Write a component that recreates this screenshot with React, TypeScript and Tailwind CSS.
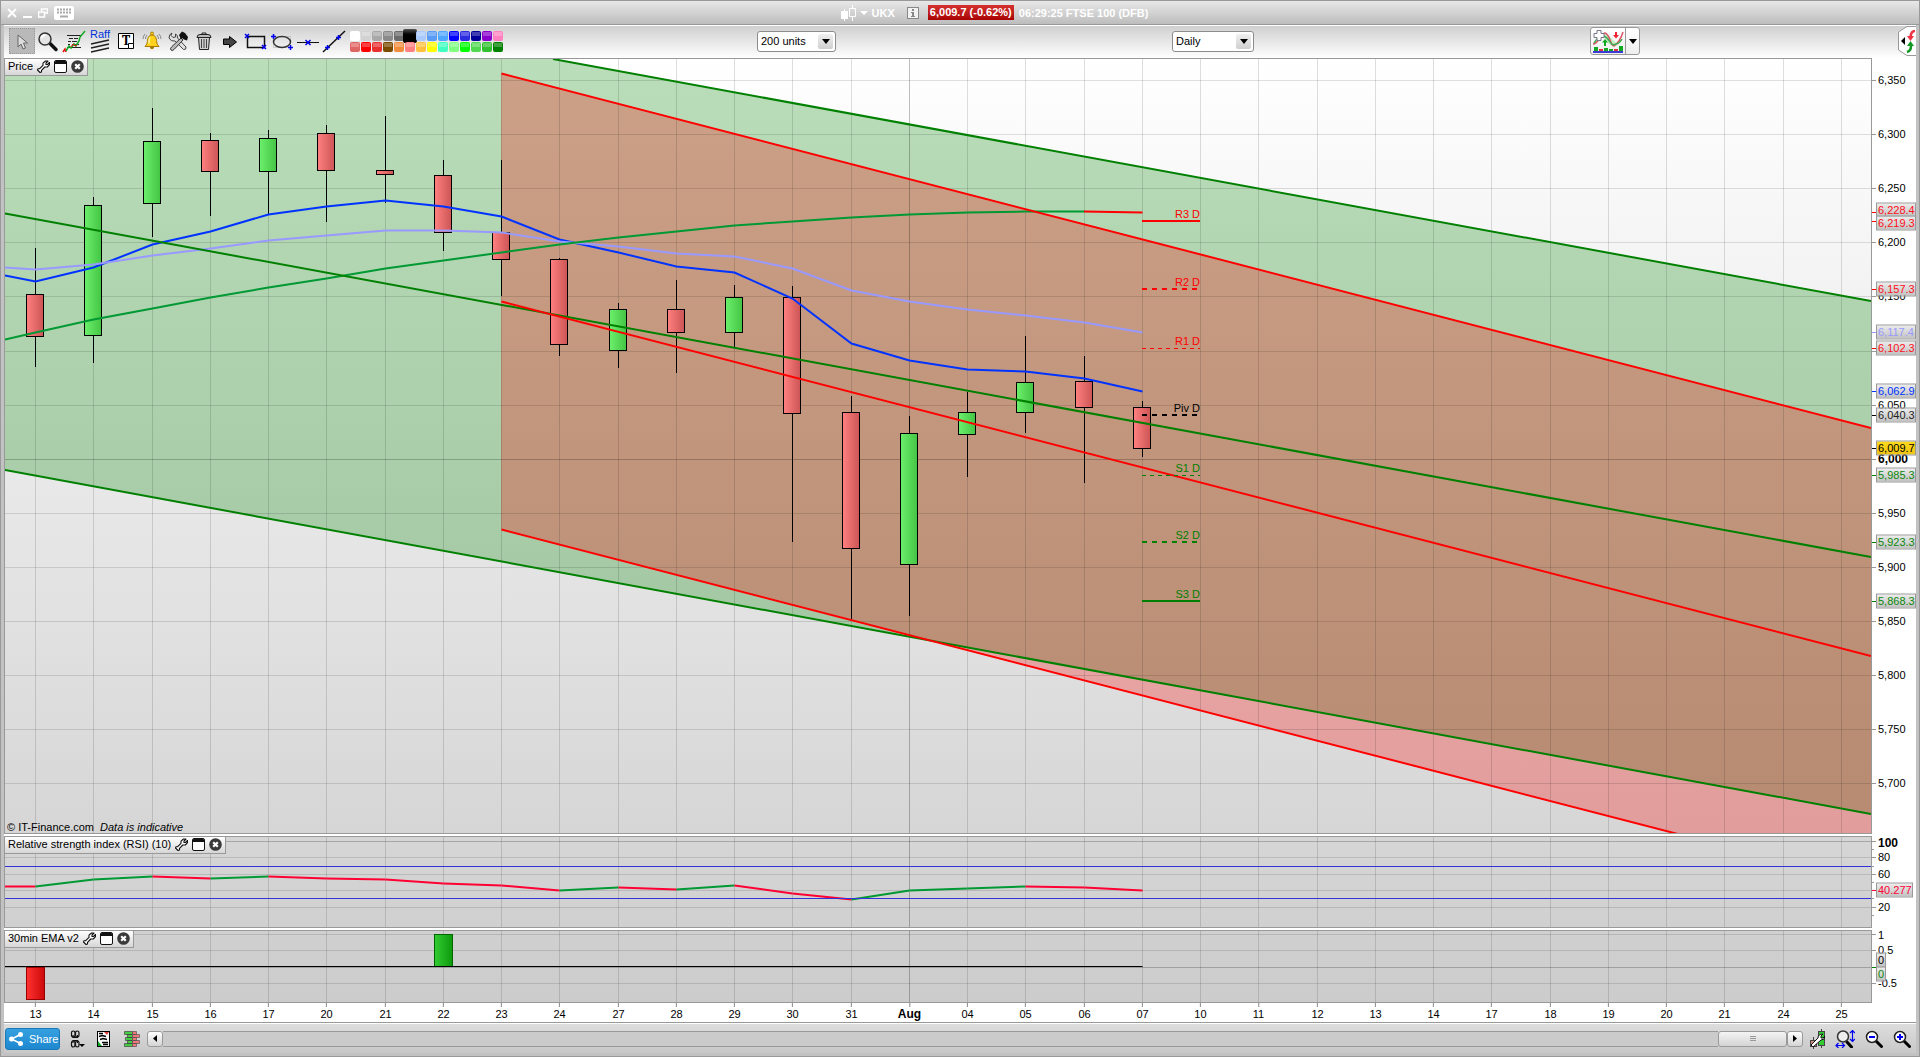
import React from "react";

type Candle = { high: number; top: number; bottom: number; low: number; up: boolean };
type Tag = { y: number; center: number; text: string; tone: string; tick: string; wide?: string };
type Mark = { y: number; text: string; bold?: boolean; shift?: number };

const LEFT = 5;
const WIDTH = 1866;

const dates = [
  "13", "14", "15", "16", "17", "20", "21", "22", "23", "24", "27", "28", "29", "30", "31", "Aug",
  "04", "05", "06", "07", "10", "11", "12", "13", "14", "17", "18", "19", "20", "21", "24", "25",
];
const dayX = (i: number) => Math.round(35 + 58.25 * i);
const priceY = (p: number) => Math.round(80 + (6350 - p) * 1.082);

const prices = [6350, 6300, 6250, 6200, 6150, 6100, 6050, 6000, 5950, 5900, 5850, 5800, 5750, 5700];

const c = (high: number, top: number, bottom: number, low: number, up: boolean): Candle => ({ high, top, bottom, low, up });
const candles: Candle[] = [
  c(248, 294, 337, 367, false),
  c(197, 205, 336, 363, true),
  c(108, 141, 204, 237, true),
  c(133, 140, 172, 216, false),
  c(130, 138, 172, 214, true),
  c(125, 133, 171, 222, false),
  c(116, 170, 175, 203, false),
  c(160, 175, 233, 251, false),
  c(160, 232, 260, 296, false),
  c(258, 259, 345, 356, false),
  c(303, 309, 351, 368, true),
  c(280, 309, 333, 373, false),
  c(285, 297, 333, 347, true),
  c(286, 297, 414, 542, false),
  c(396, 412, 549, 619, false),
  c(416, 433, 565, 616, true),
  c(392, 412, 435, 477, true),
  c(336, 382, 413, 433, true),
  c(356, 381, 408, 483, false),
  c(401, 407, 449, 457, false),
];

// Each series starts at the left edge and then has one value per day.
const fastMa = [275, 281, 267, 244, 231, 214, 206, 200, 206, 216, 239, 252, 266, 272, 298, 343, 360, 369, 371, 378, 391];
const slowMa = [267, 269, 264, 255, 248, 240, 235, 230, 230, 232, 241, 246, 253, 256, 268, 290, 301, 309, 315, 322, 332];
const longMa = [339, 332, 319, 308, 297, 287, 278, 268, 260, 252, 244, 237, 231, 225, 221, 217, 214, 212, 211, 211];
const rsi = [886, 886, 879, 876, 878, 876, 878, 879, 883, 885, 890, 887, 889, 885, 893, 899, 890, 888, 886, 887, 890];

const seriesX = (i: number) => (i === 0 ? LEFT : dayX(i - 1) + 0.5);
const points = (ys: number[]) => ys.map((y, i) => `${seriesX(i)},${y + 0.5}`).join(" ");

const pivots = [
  { text: "R3 D", y: 221, label: 214, color: "#ff0000", tone: "text-[#ff0000]", w: 2, dash: "" },
  { text: "R2 D", y: 289, label: 282, color: "#ff0000", tone: "text-[#ff0000]", w: 2, dash: "5 5" },
  { text: "R1 D", y: 348.5, label: 341, color: "#ff0000", tone: "text-[#ff0000]", w: 1, dash: "4 4" },
  { text: "Piv D", y: 415, label: 408, color: "#000000", tone: "text-black", w: 2, dash: "5 5" },
  { text: "S1 D", y: 475.5, label: 468, color: "#008000", tone: "text-[#008000]", w: 1, dash: "4 4" },
  { text: "S2 D", y: 542, label: 535, color: "#008000", tone: "text-[#008000]", w: 2, dash: "5 5" },
  { text: "S3 D", y: 601, label: 594, color: "#008000", tone: "text-[#008000]", w: 2, dash: "" },
];

const grey = "from-[#ececec] to-[#c2c2c2]";
const red = `text-[#ff0d1a] ${grey}`;
const green = `text-[#0c870c] ${grey}`;
const priceTags: Tag[] = [
  { y: 212, center: 210, text: "6,228.4", tone: red, tick: "bg-[#ff0000]" },
  { y: 221, center: 223, text: "6,219.3", tone: red, tick: "bg-[#ff0000]" },
  { y: 289, center: 289, text: "6,157.3", tone: red, tick: "bg-[#ff0000]" },
  { y: 332, center: 332, text: "6,117.4", tone: `text-[#9999ff] ${grey}`, tick: "bg-[#9999ff]" },
  { y: 348, center: 348, text: "6,102.3", tone: red, tick: "bg-[#ff0000]" },
  { y: 391, center: 391, text: "6,062.9", tone: `text-[#0033ff] ${grey}`, tick: "bg-[#0033ff]" },
  { y: 415, center: 415, text: "6,040.3", tone: `text-[#222222] ${grey}`, tick: "bg-black" },
  { y: 448, center: 448, text: "6,009.7", tone: "text-black from-[#ffd91a] to-[#efc414]", tick: "bg-black" },
  { y: 475, center: 475, text: "5,985.3", tone: green, tick: "bg-[#008000]" },
  { y: 542, center: 542, text: "5,923.3", tone: green, tick: "bg-[#008000]" },
  { y: 601, center: 601, text: "5,868.3", tone: green, tick: "bg-[#008000]" },
];

function Grid({ rows, top, height, major }: { rows: number[]; top: number; height: number; major: number[] }) {
  return (
    <g stroke="#000000" strokeWidth="1">
      {dates.map((d, i) => (
        <path key={i} d={`M${dayX(i) + 0.5} ${top}v${height}`} strokeOpacity={d === "Aug" ? 0.25 : 0.13} />
      ))}
      {rows.map((y) => (
        <path key={y} d={`M${LEFT} ${y + 0.5}h${WIDTH}`} strokeOpacity={major.includes(y) ? 0.22 : 0.12} />
      ))}
    </g>
  );
}

function Wrench() {
  return (
    <svg viewBox="0 0 13 13" className="size-[13px]">
      <path
        d="M8.500 1H11L9 3v1.500h1.500l2-2v2.200L10.300 7H7.800L4.500 10.300V12L3 12.500.5 10 1 8.700h1.700L6 5.300V3.200z"
        fill="#fff" stroke="#111" strokeWidth="1.100" strokeLinejoin="round"
      />
    </svg>
  );
}

function PaneHeader({ title }: { title: string }) {
  return (
    <div className="absolute left-0 top-0 flex h-[17px] items-center gap-1 border-b border-r border-[#999] bg-gradient-to-b from-white to-[#d6d6d6] pb-0.5 pl-[3px] pr-[3px]">
      <span className="whitespace-nowrap leading-[14px]">{title}</span>
      <button aria-label={`${title} settings`}><Wrench /></button>
      <button aria-label={`${title} window`}>
        <svg viewBox="0 0 13 13" className="size-[13px]">
          <rect x=".5" y=".5" width="12" height="12" rx="1.500" fill="#fff" stroke="#111" />
          <path d="M1 4V2q0-1 1-1h9q1 0 1 1v2z" fill="#111" />
        </svg>
      </button>
      <button aria-label={`${title} close`}>
        <svg viewBox="0 0 13 13" className="size-[13px]">
          <circle cx="6.500" cy="6.500" r="6.300" fill="#3a3a3a" />
          <path d="m4.200 4.200 4.600 4.600m0-4.600-4.600 4.600" stroke="#fff" strokeWidth="2.200" />
        </svg>
      </button>
    </div>
  );
}

function Axis({ top, height, marks, minor = [], tags }: { top: number; height: number; marks: Mark[]; minor?: number[]; tags: Tag[] }) {
  const at = (y: number) => ({ top: `${((y - top) / height) * 100}%` });
  return (
    <div className="relative w-11 shrink-0 bg-white">
      {marks.map((m) => (
        <React.Fragment key={m.y}>
          <span className="absolute left-0 h-px w-1 bg-[#999]" style={at(m.y)} />
          {m.text && (
            <span
              className={m.bold ? "absolute left-1.5 -translate-y-1/2 text-xs font-bold leading-[14px]" : "absolute left-1.5 -translate-y-1/2 leading-[14px]"}
              style={at(m.y + (m.shift ?? 0))}
            >
              {m.text}
            </span>
          )}
        </React.Fragment>
      ))}
      {minor.map((y) => (
        <span key={y} className="absolute left-0 h-px w-0.5 bg-[#999]" style={at(y)} />
      ))}
      {tags.map((t, i) => (
        <React.Fragment key={i}>
          <span className={`absolute left-0 h-px w-1 ${t.tick}`} style={at(t.y)} />
          <span
            className={`absolute left-1 flex h-[15px] -translate-y-1/2 items-center border border-[#999] bg-gradient-to-b pl-px leading-[13px] ${t.wide ?? "w-10"} ${t.tone}`}
            style={at(t.center)}
          >
            {t.text}
          </span>
        </React.Fragment>
      ))}
    </div>
  );
}

function PricePane() {
  const top = 59;
  const height = 774;
  return (
    <div className="flex min-h-[320px] flex-1">
      <div className="relative flex-1 overflow-hidden border border-[#999] bg-gradient-to-b from-white to-[#d6d6d6]">
        <svg viewBox={`${LEFT} ${top} ${WIDTH} ${height}`} preserveAspectRatio="none" className="absolute inset-0 h-full w-full">
          <defs>
            <linearGradient id="up"><stop offset="0" stopColor="#6cf06c" /><stop offset="1" stopColor="#44c444" /></linearGradient>
            <linearGradient id="down"><stop offset="0" stopColor="#ff8080" /><stop offset="1" stopColor="#cc5555" /></linearGradient>
          </defs>
          <path d="M5 59H553L1871 301V814L5 470z" fill="#008000" fillOpacity=".27" />
          <path d="M501 73.500 1871 428V884L501 529.500z" fill="#ff0000" fillOpacity=".27" />
          <Grid rows={prices.map(priceY)} top={top} height={height} major={[priceY(6000)]} />
          {candles.map((k, i) => (
            <g key={i} stroke="#000" strokeWidth="1">
              <path d={`M${dayX(i) + 0.5} ${k.high}V${k.low}`} />
              <rect x={dayX(i) - 8.5} y={k.top + 0.5} width="17" height={k.bottom - k.top - 1} fill={k.up ? "url(#up)" : "url(#down)"} />
            </g>
          ))}
          <g fill="none" strokeWidth="2">
            <polyline points={points(fastMa)} stroke="#0033ff" />
            <polyline points={points(slowMa)} stroke="#9999ff" />
            <polyline points={points(longMa)} stroke="#009933" />
            <path d="M1084 211.500 1142.500 212.500" stroke="#ff0000" />
            <path d="M553 59 1871 301M5 213.500 1871 557M5 470 1871 814" stroke="#008000" />
            <path d="M501.500 73.500 1871 428M501.500 301.500 1871 656M501.500 529.500 1871 884" stroke="#ff0000" />
          </g>
          {pivots.map((p) => (
            <path key={p.text} d={`M1142 ${p.y}h58`} stroke={p.color} strokeWidth={p.w} strokeDasharray={p.dash || undefined} />
          ))}
        </svg>
        {pivots.map((p) => (
          <span
            key={p.text}
            className={`absolute -translate-y-1/2 leading-[14px] ${p.tone}`}
            style={{ right: `${((1871 - 1200) / WIDTH) * 100}%`, top: `${((p.label - top) / height) * 100}%` }}
          >
            {p.text}
          </span>
        ))}
        <PaneHeader title="Price" />
        <p className="absolute bottom-0 left-0.5 leading-3">
          © IT-Finance.com <em className="ml-[3px]">Data is indicative</em>
        </p>
      </div>
      <Axis
        top={58}
        height={776}
        marks={prices.map((p) => ({ y: priceY(p), text: p === 6100 ? "" : p.toLocaleString("en-US"), bold: p === 6000 }))}
        tags={priceTags}
      />
    </div>
  );
}

function RsiPane() {
  return (
    <div className="flex h-[92px] shrink-0">
      <div className="relative flex-1 overflow-hidden border border-[#999] bg-gradient-to-b from-[#d6d6d6] to-[#d0d0d0]">
        <svg viewBox={`${LEFT} 837 ${WIDTH} 90`} preserveAspectRatio="none" className="absolute inset-0 h-full w-full">
          <Grid rows={[841, 857, 874, 890, 907]} top={837} height={90} major={[841]} />
          {rsi.slice(1).map((y, i) => (
            <path key={i} d={`M${seriesX(i)} ${rsi[i] + 0.5}L${seriesX(i + 1)} ${y + 0.5}`} stroke={y < rsi[i] ? "#009933" : "#ff0033"} strokeWidth="2" />
          ))}
          <path d={`M${LEFT} 866.500h${WIDTH}M${LEFT} 898.500h${WIDTH}`} stroke="#3333dd" />
        </svg>
        <PaneHeader title="Relative strength index (RSI) (10)" />
      </div>
      <Axis
        top={836}
        height={92}
        marks={[
          { y: 841, text: "100", bold: true, shift: 2 },
          { y: 857, text: "80" },
          { y: 874, text: "60" },
          { y: 907, text: "20" },
        ]}
        minor={[849, 866, 882, 898, 915]}
        tags={[{ y: 890, center: 890, text: "40.277", tone: `text-[#ff0033] ${grey}`, tick: "bg-[#ff0033]", wide: "w-[37px]" }]}
      />
    </div>
  );
}

function EmaPane() {
  return (
    <div className="flex h-[73px] shrink-0">
      <div className="relative flex-1 overflow-hidden border border-[#999] bg-gradient-to-b from-[#d0d0d0] to-[#cccccc]">
        <svg viewBox={`${LEFT} 931 ${WIDTH} 71`} preserveAspectRatio="none" className="absolute inset-0 h-full w-full">
          <defs>
            <linearGradient id="buy"><stop offset="0" stopColor="#33cc33" /><stop offset="1" stopColor="#0d990d" /></linearGradient>
            <linearGradient id="sell"><stop offset="0" stopColor="#ff3333" /><stop offset="1" stopColor="#cc0808" /></linearGradient>
          </defs>
          <Grid rows={[934, 950, 967, 983]} top={931} height={71} major={[967]} />
          <rect x="26.500" y="967.500" width="18" height="32" fill="url(#sell)" stroke="#990000" />
          <rect x="434.500" y="934.500" width="18" height="32" fill="url(#buy)" stroke="#006600" />
          <path d="M5 966.500H1142.500" stroke="#000" />
        </svg>
        <PaneHeader title="30min EMA v2" />
      </div>
      <Axis
        top={930}
        height={73}
        marks={[
          { y: 934, text: "1", shift: 1 },
          { y: 950, text: "0.5" },
          { y: 983, text: "-0.5" },
        ]}
        tags={[
          { y: 967, center: 960, text: "0", tone: `text-black ${grey}`, tick: "bg-black", wide: "w-2.5" },
          { y: 967, center: 974, text: "0", tone: green, tick: "bg-[#008000]", wide: "w-2.5" },
        ]}
      />
    </div>
  );
}

function DateAxis() {
  return (
    <div className="flex h-5 shrink-0 border-b border-[#999] bg-white">
      <div className="relative flex-1">
        {dates.map((d, i) => (
          <div
            key={i}
            className="absolute top-0 flex -translate-x-1/2 flex-col items-center"
            style={{ left: `${((dayX(i) - 4 + 0.5) / 1868) * 100}%` }}
          >
            <span className="h-1 w-px bg-[#888]" />
            <span className={d === "Aug" ? "text-xs font-bold leading-[14px]" : "leading-[14px]"}>{d}</span>
          </div>
        ))}
      </div>
      <div className="w-11" />
    </div>
  );
}

const swatches = [
  ["bg-white", "bg-[#d2d2d2]", "bg-[#a8a8a8]", "bg-[#8a8a8a]", "bg-[#6b6b6b]", "bg-black", "bg-[#a9c8fb]", "bg-[#5a9bf5]", "bg-[#4da6ff]", "bg-[#0000ff]", "bg-[#2b2be0]", "bg-[#000099]", "bg-[#8800cc]", "bg-[#ff80c0]"],
  ["bg-[#e06666]", "bg-[#ff0000]", "bg-[#e83030]", "bg-[#7a4a00]", "bg-[#f08c3c]", "bg-[#ff8080]", "bg-[#ffc040]", "bg-[#ffff00]", "bg-[#40ffc0]", "bg-[#80ff80]", "bg-[#00ff00]", "bg-[#50d850]", "bg-[#30c030]", "bg-[#008000]"],
];

const tools: { name: string; art: React.ReactNode }[] = [
  {
    name: "Select",
    art: <path d="M9 7v12l3-3 2 5 2.500-1-2-5h4z" fill="#ddd" stroke="#666" />,
  },
  {
    name: "Magnifier",
    art: (
      <>
        <path d="m15 15.500 6 6" stroke="#111" strokeWidth="3.500" strokeLinecap="round" />
        <circle cx="10" cy="11" r="6" fill="#e4e4e4" stroke="#333" strokeWidth="1.500" />
        <path d="M6.500 10q1-3 4-3" stroke="#fff" strokeWidth="2" fill="none" />
      </>
    ),
  },
  {
    name: "Indicator note",
    art: (
      <>
        <path d="M6 7.500h14M6 19.500h14" stroke="#222" />
        <path d="M8 10.500h4m1 0h4M7 13.500h3m1 0h5M7 16.500h2m2 0h7" stroke="#222" />
        <path d="m2 24 2-3 1 3" stroke="#ee1111" fill="none" strokeWidth="1.500" />
        <path d="m5 23 3-5 2 2 3-4 2 2 3-5 1-4 5-6" stroke="#11aa22" fill="none" strokeWidth="1.500" />
        <path d="m10 19 2-3 2 2 2-1" stroke="#ee1111" fill="none" />
      </>
    ),
  },
  {
    name: "Raff",
    art: <path d="m4 16 18-4M4 20l18-4M4 24l18-4" stroke="#222" strokeWidth="1.500" />,
  },
  {
    name: "Text",
    art: (
      <>
        <path d="M5.500 5.500h15v10l-5 5h-10z" fill="#fff" stroke="#000" />
        <path d="M20.500 15.500v5h-5v-5z" fill="#fff" stroke="#000" />
      </>
    ),
  },
  {
    name: "Alert",
    art: (
      <>
        <path d="M6 18.500q2.500-2 2.500-6Q9 7 13 7t4.500 5.500q0 4 2.500 6z" fill="#ffd21f" stroke="#a87b00" />
        <path d="M11 9.500q-1 1-1 6" stroke="#fff3a8" strokeWidth="1.500" fill="none" />
        <circle cx="13" cy="5.500" r="1.500" fill="#ffd21f" stroke="#a87b00" />
        <path d="M11 19.500q2 3 4 0z" fill="#e0a800" stroke="#a87b00" />
        <path d="M6 6q-2 2-2 5M20 6q2 2 2 5M8 7q-1.500 1.500-1.500 4M18 7q1.500 1.500 1.500 4" stroke="#888" fill="none" />
      </>
    ),
  },
  {
    name: "Tools",
    art: (
      <>
        <path d="M7 5 6 7.500l2 2L10.500 9V6q2.500 1 2 4l8.500 9q.5 3-2.500 2.500L10 13q-4 1-6-3 0-4 3-5z" fill="#e0e0e0" stroke="#444" />
        <path d="m16 10-9 8.500q-2.500 2-1 3.500t3.500-1L18 12z" fill="#bbb" stroke="#333" />
        <path d="m14 7 3-3.500 3 1.500 3 4-1 3.500-3-1-2-1.500-1 1.500z" fill="#111" />
      </>
    ),
  },
  {
    name: "Delete",
    art: (
      <>
        <path d="M7.500 9.500h11l-1 12h-9z" fill="#d0d0d0" stroke="#222" />
        <path d="M10.500 11v9M13 11v9M15.500 11v9" stroke="#444" />
        <path d="M6 9.500q0-3 3-3h8q3 0 3 3z" fill="#bbb" stroke="#222" />
        <path d="M11 6.500v-1.500h4v1.500" fill="none" stroke="#222" />
      </>
    ),
  },
  {
    name: "Arrow",
    art: <path d="M6.500 11h6V8.500l7 5.500-7 5.500v-3h-6z" fill="#444" stroke="#000" />,
  },
  {
    name: "Rectangle",
    art: (
      <>
        <rect x="4.500" y="8.500" width="17" height="11" fill="none" stroke="#111" strokeWidth="1.500" />
        <path d="m2 6 4 4m0-4-4 4m17 7 4 4m0-4-4 4" stroke="#0000ee" strokeWidth="1.500" />
      </>
    ),
  },
  {
    name: "Ellipse",
    art: (
      <>
        <rect x="4.500" y="8.500" width="17" height="11" fill="none" stroke="#aaa" strokeDasharray="1 1" />
        <ellipse cx="13" cy="14" rx="8.500" ry="5.500" fill="none" stroke="#333" strokeWidth="1.500" />
        <path d="M2 8.500h5M4.500 6v5M19 19.500h5M21.500 17v5" stroke="#0000ee" strokeWidth="1.500" />
      </>
    ),
  },
  {
    name: "Horizontal line",
    art: (
      <>
        <path d="M2 14.500h22" stroke="#111" />
        <path d="m10.500 12 5 5m0-5-5 5" stroke="#0000ee" strokeWidth="1.500" />
      </>
    ),
  },
  {
    name: "Trend line",
    art: (
      <>
        <path d="M2 24 24 3" stroke="#111" strokeWidth="1.500" />
        <path d="M4 19.500h5M6.500 17v5M15 9.500h5M17.500 7v5" stroke="#0000ee" strokeWidth="1.500" />
      </>
    ),
  },
];

function TitleBar() {
  return (
    <header className="flex h-6 shrink-0 items-center justify-between border-b border-[#999] bg-gradient-to-b from-[#e8e8e8] to-[#bdbdbd] pl-1.5 font-bold text-white">
      <div className="flex items-center gap-1.5">
        <button aria-label="Close">
          <svg viewBox="0 0 10 10" className="size-[10px]"><path d="m1 1 8 8m0-8-8 8" stroke="#fff" strokeWidth="2" /></svg>
        </button>
        <button aria-label="Minimize">
          <svg viewBox="0 0 9 10" className="h-[10px] w-[9px]"><path d="M0 9h9" stroke="#fff" strokeWidth="2" /></svg>
        </button>
        <button aria-label="Restore">
          <svg viewBox="0 0 10 10" className="size-[10px]"><path d="M3.500 3V1h6v4H7M.5 4h6v5h-6z" fill="none" stroke="#fff" strokeWidth="1.500" /></svg>
        </button>
        <button aria-label="Keyboard">
          <svg viewBox="0 0 20 14" className="h-[14px] w-5">
            <rect width="20" height="14" rx="2" fill="#fff" />
            <path d="M3 3.500h14M3 6.500h14" stroke="#aaa" strokeWidth="2" strokeDasharray="2 1" />
            <path d="M6 10.500h8" stroke="#aaa" strokeWidth="2" />
          </svg>
        </button>
      </div>
      <div className="flex items-center pr-1">
        <svg viewBox="0 0 15 16" className="h-4 w-[15px]">
          <path d="M3.500 4v12M11.500 0v3M11.500 12v4" stroke="#fff" />
          <path d="M0 6h7v8H0z" fill="#fff" />
          <path d="M8.500 3.500h6v8h-6z" fill="none" stroke="#fff" />
        </svg>
        <button className="flex items-center gap-1 pl-1" aria-label="UKX">
          <svg viewBox="0 0 8 4" className="h-1 w-2"><path d="M0 0h8L4 4z" fill="#fff" /></svg>
          <span className="leading-4">UKX</span>
        </button>
        <button aria-label="Information" className="ml-3 h-3 w-3">
          <svg viewBox="0 0 12 12" className="size-3">
            <rect x=".5" y=".5" width="11" height="11" fill="#f2f2f2" stroke="#888" />
            <path d="M5 2h2v2H5zM4 5h3v4h1v1H4V9h1V6H4z" fill="#888" />
          </svg>
        </button>
        <span className="ml-[9px] h-[15px] bg-gradient-to-b from-[#d63030] to-[#a80000] px-0.5 leading-[15px]">6,009.7 (-0.62%)</span>
        <span className="ml-[5px] leading-4">06:29:25 FTSE 100 (DFB)</span>
      </div>
      <div />
    </header>
  );
}

function Dropdown({ label, value, options, width }: { label: string; value: string; options: string[]; width: string }) {
  return (
    <div className={`relative h-[21px] ${width}`}>
      <select
        aria-label={label}
        defaultValue={value}
        className="h-full w-full appearance-none rounded-[3px] border border-[#8c8c8c] bg-white pl-[3px] leading-[19px] text-black"
      >
        {options.map((o) => (
          <option key={o}>{o}</option>
        ))}
      </select>
      <span className="pointer-events-none absolute right-[3px] top-[3px] flex h-[15px] w-[15px] items-center justify-center rounded-[2px] bg-gradient-to-b from-[#f0f0f0] to-[#cfcfcf]">
        <svg viewBox="0 0 8 5" className="h-[5px] w-2"><path d="M0 0h8L4 5z" fill="#000" /></svg>
      </span>
    </div>
  );
}

function Toolbar() {
  return (
    <div className="flex h-[33px] shrink-0 items-center border-t border-white bg-gradient-to-b from-[#d0d0d0] to-white pb-0.5 pl-[5px]">
      {tools.map((t, i) => (
        <button
          key={t.name}
          aria-label={t.name}
          className={i === 0 ? "relative w-[26px] border border-dotted border-[#999] bg-[#b9b9b9]" : "relative w-[26px]"}
        >
          <svg viewBox={i === 0 ? "1 1 24 24" : "0 0 26 26"} className="block h-auto w-full">{t.art}</svg>
          {t.name === "Raff" && <span className="absolute inset-x-0 top-0 leading-3 text-[#0033dd]">Raff</span>}
          {t.name === "Text" && <span className="absolute inset-x-0 top-[5px] font-serif text-sm font-bold leading-4">T</span>}
        </button>
      ))}
      <div className="ml-[3px] grid grid-cols-14 gap-px">
        {swatches.flat().map((s, i) => (
          <button key={i} aria-label={`Colour ${i + 1}`} className={`relative size-[10px] rounded-[2px] ${s}`}>
            {i === 5 && <span className="absolute -inset-0.5 rounded-[2px] bg-gradient-to-b from-[#555] via-black to-black" />}
            {i !== 0 && i !== 5 && <span className="absolute inset-x-px top-px block h-1 bg-white/25" />}
          </button>
        ))}
      </div>
      <div className="flex-[254]" />
      <Dropdown label="Units" value="200 units" options={["100 units", "200 units", "500 units"]} width="w-[79px]" />
      <div className="flex-[336]" />
      <Dropdown label="Timeframe" value="Daily" options={["Hourly", "Daily", "Weekly"]} width="w-[82px]" />
      <div className="flex-[336]" />
      <div className="flex h-7 w-[50px] overflow-hidden rounded-[3px] border border-[#999] bg-gradient-to-b from-white to-[#eee]">
        <button aria-label="Add indicator" className="w-[35px] border-r border-[#999]">
          <svg viewBox="0 0 34 26" className="h-[26px] w-[34px]">
            <path d="m12 8 3-3 11 11 5-2-8 5-5-3z" fill="#bfeebf" />
            <path d="M2 16q3 0 6-5t6-6q3 1 5 7t4 6q6-4 9-14" fill="none" stroke="#dd5566" strokeWidth="1.500" />
            <path d="M3 15q5-8 10-7 4 2 6 6t6 2q4-1 6-5" fill="none" stroke="#44aa55" strokeWidth="1.500" />
            <path d="M6 2.500h4v3h3v4h-3v3H6v-3H3v-4h3z" fill="#fff" stroke="#778" />
            <path d="m14 11 3 3.500h-2V18h-2v-3.500h-2z" fill="#11aa22" />
            <path d="M24 4h2v3h2l-3 3.500L22 7h2z" fill="#ee2233" />
            <path d="M3 19h4v4H3zM13 20h4v3h-4zM18 21h4v2h-4zM28 18h4v5h-4z" fill="#11aa22" />
            <path d="M8 21h4v2H8zM23 21h4v2h-4z" fill="#dd3344" />
            <path d="M2 24h30" stroke="#0000cc" strokeWidth="1.500" />
          </svg>
        </button>
        <button aria-label="Indicator list" className="flex flex-1 items-center justify-center">
          <svg viewBox="0 0 8 5" className="h-[5px] w-2"><path d="M0 0h8L4 5z" fill="#000" /></svg>
        </button>
      </div>
      <div className="flex-[258]" />
      <button aria-label="Open trading panel" className="h-[30px] w-[18px]">
        <svg viewBox="0 0 18 30" className="h-[30px] w-[18px]">
          <path d="M18 .5H9L.5 6v18L9 29.500h9" fill="#fff" stroke="#999" />
          <path d="M7 11v8l-4-4z" fill="#000" />
          <path d="M17 5q-4 0-4.500 6" fill="none" stroke="#ee3344" strokeWidth="2.500" />
          <path d="M9 10h7l-3.500 5z" fill="#ee3344" />
          <path d="M9 26q4-1 4-6" fill="none" stroke="#119922" strokeWidth="2.500" />
          <path d="M9 20h7l-3.500-5z" fill="#119922" />
        </svg>
      </button>
    </div>
  );
}

function Lens({ sign }: { sign: string }) {
  return (
    <svg viewBox="0 0 18 18" className="size-[18px]">
      <path d="m11 11 5.500 5.500" stroke="#000" strokeWidth="3" strokeLinecap="round" />
      <circle cx="7" cy="7" r="5.500" fill="#fff" stroke="#222" strokeWidth="1.500" />
      <path d={sign} stroke="#0000ee" strokeWidth="2" />
    </svg>
  );
}

function Footer() {
  return (
    <footer className="flex h-[30px] shrink-0 items-center border-t border-white bg-gradient-to-b from-[#dddddd] to-[#c8c8c8] pl-px">
      <button className="flex h-[22px] w-[55px] items-center gap-1.5 rounded-[3px] border border-[#1878b8] bg-gradient-to-b from-[#35a0e0] to-[#1e88d0] pl-[3px] text-white">
        <svg viewBox="0 0 14 14" className="size-[14px]">
          <path d="M11.500 2.500 2.500 7l9 4.500" stroke="#fff" strokeWidth="1.500" fill="none" />
          <circle cx="11.500" cy="2.500" r="2.500" fill="#fff" /><circle cx="2.500" cy="7" r="2.500" fill="#fff" /><circle cx="11.500" cy="11.500" r="2.500" fill="#fff" />
        </svg>
        <span className="leading-4">Share</span>
      </button>
      <button aria-label="Link windows" className="ml-2.5">
        <svg viewBox="0 0 16 18" className="h-[18px] w-4">
          <g fill="none" stroke="#111" strokeWidth="1.200">
            <rect x="1.500" y="1" width="3.500" height="6" rx="1.700" /><rect x="5.500" y="1" width="3.500" height="6" rx="1.700" />
            <rect x="1.500" y="11" width="3.500" height="6" rx="1.700" /><rect x="5.500" y="11" width="3.500" height="6" rx="1.700" />
            <path d="M3 5v2.500h4.500V5M3 13v-2.500h4.500V13" />
          </g>
          <path d="M9 14h6l-3 3z" fill="#000" />
        </svg>
      </button>
      <button aria-label="Order list" className="ml-[11px]">
        <svg viewBox="0 0 13 16" className="h-4 w-[13px]">
          <rect x=".5" y=".5" width="12" height="15" fill="#fff" stroke="#000" />
          <path d="M2 2.500h4M2 5.500l3-1 4 1M3 8.500l3-1 4 1M5 11.500h6M6 13.500h5" stroke="#000" strokeWidth="1.500" fill="none" />
          <path d="M7 1h5L10 4z" fill="#dd4444" /><path d="M1 15v-5l4 5z" fill="#11aa22" />
        </svg>
      </button>
      <button aria-label="Order book" className="ml-3.5">
        <svg viewBox="0 0 16 16" className="size-4">
          <g fill="#44cc44" stroke="#444" strokeWidth=".7">
            <path d="M.5.500h8v3h-8zM3.500 3.500h5v3h-5zM1.500 6.500h7v3h-7zM3.500 9.500h5v3h-5zM.5 12.500h8v3h-8z" />
          </g>
          <g fill="#ee7777" stroke="#555" strokeWidth=".7">
            <path d="M8.500.500h4v3h-4zM8.500 3.500h7v3h-7zM8.500 6.500h4v3h-4zM8.500 9.500h7v3h-7zM8.500 12.500h4v3h-4z" />
          </g>
        </svg>
      </button>
      <div className="ml-[7px] flex h-4 flex-1 items-stretch">
        <button aria-label="Scroll left" className="flex w-4 items-center justify-center rounded-[3px] border border-[#999] bg-gradient-to-b from-white to-[#d4d4d4]">
          <svg viewBox="0 0 4 7" className="h-[7px] w-1"><path d="M4 0v7L0 3.500z" fill="#000" /></svg>
        </button>
        <div className="flex-1 border-y border-[#999] bg-[#cbcbcb]" />
        <div className="flex w-[69px] items-center justify-center rounded-[3px] border border-[#999] bg-gradient-to-b from-[#f4f4f4] to-[#d4d4d4]">
          <svg viewBox="0 0 6 5" className="h-[5px] w-1.5"><path d="M0 .5h6M0 2.500h6M0 4.500h6" stroke="#999" /></svg>
        </div>
        <button aria-label="Scroll right" className="flex w-4 items-center justify-center rounded-[3px] border border-[#999] bg-gradient-to-b from-white to-[#d4d4d4]">
          <svg viewBox="0 0 4 7" className="h-[7px] w-1"><path d="M0 0v7l4-3.500z" fill="#000" /></svg>
        </button>
      </div>
      <div className="flex items-center gap-[10px] pl-1.5 pr-[5px]">
        <button aria-label="Chart settings">
          <svg viewBox="0 0 16 20" className="h-5 w-4">
            <path d="M4.500 8v12M12.500 0v19" stroke="#444" />
            <rect x="1.500" y="11.500" width="6" height="6" fill="#cc8877" stroke="#444" />
            <rect x="9.500" y="2.500" width="6" height="14" fill="#33cc33" stroke="#444" />
            <path d="m14 5-2 2v2h2l2-2q0 4-4 4l-8 7-2-2 7-7q0-4 5-4z" fill="#fff" stroke="#111" />
          </svg>
        </button>
        <button aria-label="Auto zoom">
          <svg viewBox="0 0 20 18" className="h-[18px] w-5">
            <path d="m12 12 4.500 5" stroke="#000" strokeWidth="3" strokeLinecap="round" />
            <circle cx="8" cy="6.500" r="5.500" fill="#eee" stroke="#333" strokeWidth="1.500" />
            <path d="M17.500 1v10M15 3l2.500-2.500L20 3M15 9l2.500 2.500L20 9M1 15.500h8M3.500 13 1 15.500 3.500 18M7 13l2.500 2.500L7 18" stroke="#0000ee" fill="none" strokeWidth="1.200" />
          </svg>
        </button>
        <button aria-label="Zoom out"><Lens sign="M4 7h6" /></button>
        <button aria-label="Zoom in"><Lens sign="M4 7h6M7 4v6" /></button>
      </div>
    </footer>
  );
}

export default function App() {
  return (
    <div className="flex h-screen w-full flex-col overflow-hidden border border-[#999] bg-[#c2c2c2] font-['Liberation_Sans',Arial,sans-serif] text-[11px] text-black">
      <TitleBar />
      <div className="mx-[3px] mb-[3px] flex min-h-0 flex-1 flex-col bg-white">
        <Toolbar />
        <main className="flex min-h-0 flex-1 flex-col">
          <PricePane />
          <div className="h-0.5 shrink-0" />
          <RsiPane />
          <div className="h-0.5 shrink-0" />
          <EmaPane />
          <DateAxis />
        </main>
        <Footer />
      </div>
    </div>
  );
}
